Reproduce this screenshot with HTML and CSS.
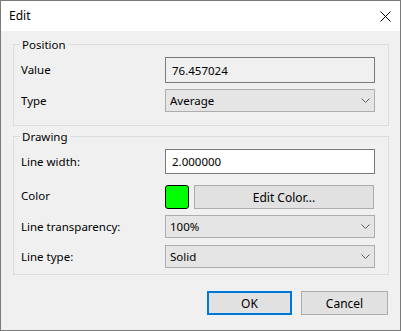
FILE: index.html
```html
<!DOCTYPE html>
<html lang="en">

<head>
  <meta charset="UTF-8">
  <meta name="viewport" content="width=device-width, initial-scale=1.0">
  <title>Edit</title>
  <link rel="stylesheet" href="styles.css">
</head>

<body>

  <div class="window">
    <div class="titlebar">
      <span class="title">Edit</span>
      <svg class="close" width="11" height="11" viewBox="0 0 11 11">
        <path d="M0.5 0.5 L10.5 10.5 M10.5 0.5 L0.5 10.5" stroke="#000" stroke-width="1" fill="none" />
      </svg>
    </div>

    <div class="content">
      <!-- Position -->
      <div class="group group-pos">
        <div class="legend">Position</div>
        <div class="row row-value">
          <div class="label">Value</div>
          <div class="field readonly">76.457024</div>
        </div>
        <div class="row row-type">
          <div class="label">Type</div>
          <div class="combo">
            <span>Average</span>
            <svg class="chev" width="9" height="5" viewBox="0 0 9 5">
              <path d="M0.5 0.5 L4.5 4.5 L8.5 0.5" stroke="#5c5c5c" stroke-width="1" fill="none" />
            </svg>
          </div>
        </div>
      </div>

      <!-- Drawing -->
      <div class="group group-draw">
        <div class="legend">Drawing</div>
        <div class="row row-width">
          <div class="label">Line width:</div>
          <div class="field">2.000000</div>
        </div>
        <div class="row row-color">
          <div class="label">Color</div>
          <div class="swatch"></div>
          <div class="btn btn-wide">Edit Color...</div>
        </div>
        <div class="row row-transp">
          <div class="label">Line transparency:</div>
          <div class="combo">
            <span>100%</span>
            <svg class="chev" width="9" height="5" viewBox="0 0 9 5">
              <path d="M0.5 0.5 L4.5 4.5 L8.5 0.5" stroke="#5c5c5c" stroke-width="1" fill="none" />
            </svg>
          </div>
        </div>
        <div class="row row-ltype">
          <div class="label">Line type:</div>
          <div class="combo">
            <span>Solid</span>
            <svg class="chev" width="9" height="5" viewBox="0 0 9 5">
              <path d="M0.5 0.5 L4.5 4.5 L8.5 0.5" stroke="#5c5c5c" stroke-width="1" fill="none" />
            </svg>
          </div>
        </div>
      </div>

      <div class="buttons">
        <div class="btn btn-ok">OK</div>
        <div class="btn btn-cancel">Cancel</div>
      </div>
    </div>
  </div>

</body>

</html>
```

FILE: styles.css
```css
* {
  margin: 0;
  padding: 0;
  box-sizing: border-box;
}

body {
  font-family: "Noto Sans", "Open Sans", sans-serif;
  font-size: 11.5px;
  color: #000;
  background: #f0f0f0;
}

.window {
  width: 401px;
  height: 331px;
  border: 1px solid #7a7a7a;
  background: #f0f0f0;
  display: flex;
  flex-direction: column;
}

.titlebar {
  height: 30px;
  background: #fff;
  display: flex;
  align-items: center;
  justify-content: space-between;
  padding: 0 9px 0 8px;
}

.title {
  font-size: 12px;
  line-height: 16px;
}

.close {
  display: block;
  margin-top: 1px;
}

.content {
  flex: 1;
  padding: 13px 11px 0 12px;
}

.group {
  border: 1px solid #dcdcdc;
}

.group-pos {
  padding-bottom: 13px;
}

.group-draw {
  margin-top: 10px;
  padding-bottom: 6px;
}

.legend {
  width: max-content;
  margin: -8px 0 0 6px;
  padding: 0 2px;
  line-height: 16px;
  background: #f0f0f0;
}

/* one label + control per row */
.row {
  display: flex;
  align-items: center;
  padding-left: 7px;
}

.label {
  width: 144px;
  line-height: 16px;
  white-space: nowrap;
}

.row-value {
  margin-top: 4px;
  height: 26px;
}

.row-type {
  margin-top: 6px;
  height: 23px;
}

.row-width {
  margin-top: 4px;
  height: 25px;
}

.row-color {
  margin-top: 11px;
  height: 24px;
  gap: 5px;
}

.row-color .label {
  width: 139px;
  margin-top: -3px;
}

.row-transp {
  margin-top: 6px;
  height: 23px;
}

.row-ltype {
  margin-top: 7px;
  height: 23px;
}

.field {
  width: 210px;
  height: 100%;
  border: 1px solid #7a7a7a;
  background: #fff;
  padding: 0 6px;
  display: flex;
  align-items: center;
}

.field.readonly {
  background: #f0f0f0;
}

.combo {
  width: 210px;
  height: 100%;
  border: 1px solid #adadad;
  background: #e5e5e5;
  padding: 0 4px 0 4px;
  display: flex;
  align-items: center;
  justify-content: space-between;
}

.chev {
  display: block;
}

.swatch {
  width: 24px;
  height: 24px;
  background: #00ff00;
  border: 1px solid #000;
  border-radius: 3px;
}

.btn {
  height: 24px;
  border: 1px solid #adadad;
  background: #e1e1e1;
  display: flex;
  align-items: center;
  justify-content: center;
  font-size: 12px;
}

.btn-wide {
  width: 180px;
}

.buttons {
  display: flex;
  justify-content: flex-end;
  gap: 9px;
  margin-top: 16px;
  padding-right: 1px;
}

.btn-ok {
  width: 85px;
  border: 2px solid #0078d7;
}

.btn-cancel {
  width: 87px;
}
```
